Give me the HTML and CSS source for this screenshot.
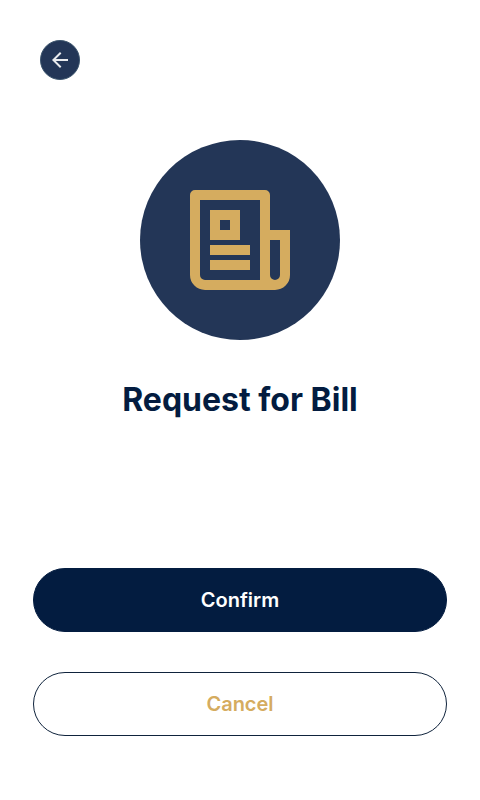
FILE: index.html
```html
<!DOCTYPE html>
<html lang="en">
<head>
<meta charset="utf-8">
<title>Request for Bill</title>
<link rel="stylesheet" href="styles.css">
</head>
<body>
<main class="screen">
  <button class="back" aria-label="Back">
    <svg width="24" height="24" viewBox="0 0 24 24"><path d="M20 11H7.83l5.59-5.59L12 4l-8 8 8 8 1.41-1.41L7.83 13H20v-2z"/></svg>
  </button>
  <section class="hero">
    <div class="emblem">
      <svg width="100" height="100" viewBox="0 0 100 100">
        <path fill-rule="evenodd" d="M5 0H75a5 5 0 0 1 5 5V40H100V85a15 15 0 0 1-15 15H15a15 15 0 0 1-15-15V5a5 5 0 0 1 5-5ZM10 10V85a5 5 0 0 0 5 5H70V10ZM80 50V85a5 5 0 0 0 10 0V50ZM20 20H50V50H20ZM30 30V40H40V30ZM20 55H60V65H20ZM20 70H60V80H20Z"/>
      </svg>
    </div>
    <h1 class="title">Request for Bill</h1>
  </section>
  <div class="actions">
    <button class="btn btn-primary">Confirm</button>
    <button class="btn btn-outline">Cancel</button>
  </div>
</main>
</body>
</html>
```
FILE: styles.css
```css
* { box-sizing: border-box; }
body { margin: 0; background: #fff; font-family: Inter, sans-serif; }
.screen {
  height: 800px;
  padding: 40px 33px 64px;
  display: flex;
  flex-direction: column;
}
.back {
  width: 40px;
  height: 40px;
  margin-left: 7px;
  padding: 0;
  border: 1px solid #3d566e;
  border-radius: 50%;
  background: #233657;
  display: flex;
  align-items: center;
  justify-content: center;
}
.back svg { fill: #e9ebee; }
.hero {
  margin-top: 60px;
  display: flex;
  flex-direction: column;
  align-items: center;
}
.emblem {
  width: 200px;
  height: 200px;
  border-radius: 50%;
  background: #233657;
  display: flex;
  align-items: center;
  justify-content: center;
}
.emblem svg { fill: #d5ac5f; }
.title {
  margin: 40px 0 0;
  font-size: 32px;
  line-height: 40px;
  font-weight: 700;
  color: #031c40;
}
.actions {
  margin-top: auto;
  display: flex;
  flex-direction: column;
  gap: 40px;
}
.btn {
  height: 64px;
  padding: 0;
  border: 1px solid #0f233c;
  border-radius: 32px;
  font: 600 20px/24px Inter, sans-serif;
}
.btn-primary { background: #031c40; border-color: #031c40; color: #fff; }
.btn-outline { background: #fff; color: #d5ac5f; }
```
